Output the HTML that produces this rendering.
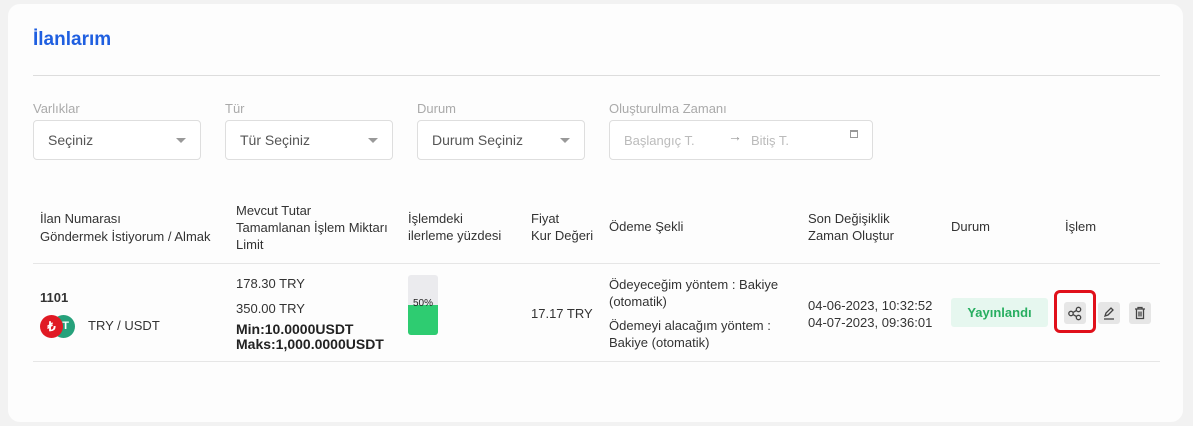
<!DOCTYPE html><html><head><meta charset="utf-8"><style>
body{margin:0;background:#f2f2f2;font-family:"Liberation Sans",sans-serif;width:1193px;height:426px;overflow:hidden;position:relative}
.card{position:absolute;left:8px;top:4px;width:1175px;height:418px;background:#fdfdfd;border-radius:12px}
.a{position:absolute;white-space:nowrap}
.t{color:#333;font-size:13px}
.lbl{color:#aaa;font-size:13px}
.sel{position:absolute;top:120px;height:38px;border:1px solid #dedede;border-radius:4px;background:#fff}
.sel span{position:absolute;left:14px;top:11px;font-size:14px;color:#555}
.sel i{position:absolute;right:14px;top:17px;border-left:5px solid transparent;border-right:5px solid transparent;border-top:5px solid #999}
.btn{position:absolute;top:302px;width:22px;height:22px;background:#e6e6e6;border-radius:3px}
</style></head><body><div class="card"></div>
<div class="a" style="left:33px;top:29px;font-size:19px;color:#1f5fe0;font-weight:bold">İlanlarım</div>
<div class="a" style="left:33px;top:75px;width:1127px;height:1px;background:#ddd"></div>
<div class="a lbl" style="left:33px;top:101px">Varlıklar</div>
<div class="a lbl" style="left:225px;top:101px">Tür</div>
<div class="a lbl" style="left:417px;top:101px">Durum</div>
<div class="a lbl" style="left:609px;top:101px">Oluşturulma Zamanı</div>
<div class="sel" style="left:33px;width:166px"><span>Seçiniz</span><i></i></div>
<div class="sel" style="left:225px;width:166px"><span>Tür Seçiniz</span><i></i></div>
<div class="sel" style="left:417px;width:166px"><span>Durum Seçiniz</span><i></i></div>
<div class="sel" style="left:609px;width:262px"><span style="color:#bbb;font-size:13px;top:12px">Başlangıç T.</span><span style="left:118px;color:#999;top:7px">→</span><span style="left:141px;color:#bbb;font-size:13px;top:12px">Bitiş T.</span><span style="left:240px;top:9px;width:6px;height:5px;border:1px solid #999;border-top-width:2px"></span></div>
<div class="a t" style="left:40px;top:210px;line-height:18px">İlan Numarası<br>Göndermek İstiyorum / Almak</div>
<div class="a t" style="left:236px;top:202px;line-height:17px">Mevcut Tutar<br>Tamamlanan İşlem Miktarı<br>Limit</div>
<div class="a t" style="left:408px;top:210px;line-height:17px">İşlemdeki<br>ilerleme yüzdesi</div>
<div class="a t" style="left:531px;top:210px;line-height:17px">Fiyat<br>Kur Değeri</div>
<div class="a t" style="left:609px;top:219px">Ödeme Şekli</div>
<div class="a t" style="left:808px;top:210px;line-height:17px">Son Değişiklik<br>Zaman Oluştur</div>
<div class="a t" style="left:951px;top:219px">Durum</div>
<div class="a t" style="left:1065px;top:219px">İşlem</div>
<div class="a" style="left:33px;top:263px;width:1127px;height:1px;background:#e6e6e6"></div>
<div class="a" style="left:33px;top:361px;width:1127px;height:1px;background:#e6e6e6"></div>
<div class="a t" style="left:40px;top:290px;font-weight:bold">1101</div>
<div class="a" style="left:52px;top:315px;width:23px;height:23px;border-radius:50%;background:#26a17b;color:#fff;font-size:11px;text-align:right;line-height:23px;font-weight:bold"><span style="margin-right:6px">T</span></div>
<div class="a" style="left:40px;top:315px;width:23px;height:23px;border-radius:50%;background:#e01a24;color:#fff;font-size:13px;text-align:center;line-height:23px;font-weight:bold">₺</div>
<div class="a t" style="left:88px;top:318px">TRY / USDT</div>
<div class="a t" style="left:236px;top:276px">178.30 TRY</div>
<div class="a t" style="left:236px;top:301px">350.00 TRY</div>
<div class="a t" style="left:236px;top:322px;font-size:14px;line-height:15px;font-weight:bold;color:#222">Min:10.0000USDT<br>Maks:1,000.0000USDT</div>
<div class="a" style="left:408px;top:275px;width:30px;height:60px;background:#ebebee;border-radius:3px;overflow:hidden"><div style="position:absolute;top:30px;width:30px;height:30px;background:#2ecc71"></div><div style="position:absolute;top:23px;width:30px;text-align:center;font-size:10px;color:#222">50%</div></div>
<div class="a t" style="left:531px;top:306px">17.17 TRY</div>
<div class="a t" style="left:609px;top:276px;line-height:17px">Ödeyeceğim yöntem : Bakiye<br>(otomatik)</div>
<div class="a t" style="left:609px;top:317px;line-height:17px">Ödemeyi alacağım yöntem :<br>Bakiye (otomatik)</div>
<div class="a t" style="left:808px;top:297px;line-height:17px">04-06-2023, 10:32:52<br>04-07-2023, 09:36:01</div>
<div class="a" style="left:951px;top:298px;width:97px;height:29px;background:#e6f7ef;border-radius:3px;color:#27ae60;font-size:13px;font-weight:bold;text-align:center;line-height:29px">Yayınlandı</div>
<div class="a" style="left:1054px;top:290px;width:42px;height:43px;border:3px solid #e0101a;border-radius:6px;box-sizing:border-box"></div>
<div class="btn" style="left:1064px"><svg width="22" height="22"><g fill="none" stroke="#444" stroke-width="1.3"><circle cx="7" cy="11.5" r="2.2"/><circle cx="14.5" cy="7.5" r="2.2"/><circle cx="14.5" cy="15.5" r="2.2"/><path d="M9 10.4l3.5-1.9M9 12.6l3.5 1.9"/></g></svg></div>
<div class="btn" style="left:1098px"><svg width="22" height="22"><g fill="none" stroke="#444" stroke-width="1.3"><path d="M7 14l1-3 5-5 2 2-5 5z"/><path d="M6 17h10"/></g></svg></div>
<div class="btn" style="left:1129px"><svg width="22" height="22"><g fill="none" stroke="#444" stroke-width="1.3"><path d="M6 7h10M9 7V5.5h4V7M7.5 7.5v9h7v-9M10 9.5v5M12 9.5v5"/></g></svg></div>
</body></html>
